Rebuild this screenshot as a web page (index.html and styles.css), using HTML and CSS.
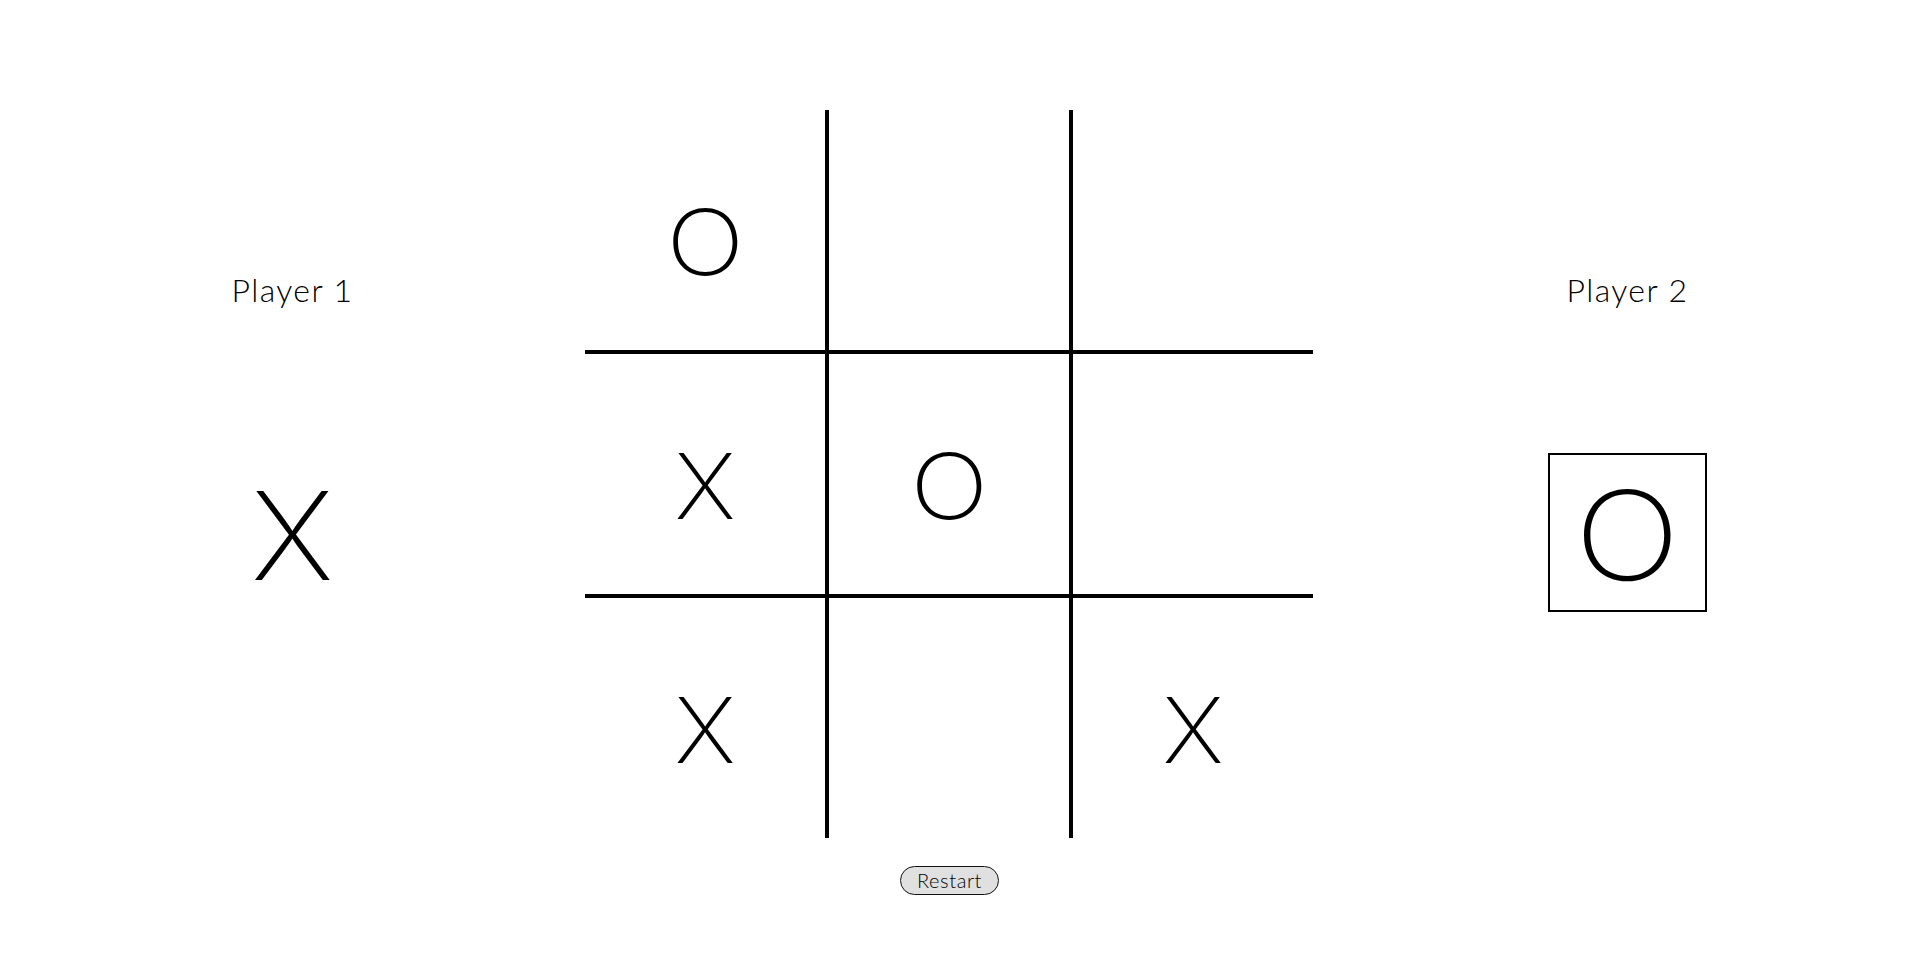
FILE: index.html
```html
<!DOCTYPE html>
<html lang="en">
<head>
<meta charset="utf-8">
<title>Tic Tac Toe</title>
<link rel="stylesheet" href="styles.css">
</head>
<body>
<main class="game">
  <section class="player">
    <h2 class="player-name">Player 1</h2>
    <div class="player-mark"><span class="mark mark-x">X</span></div>
  </section>
  <section class="center">
    <div class="board">
      <div class="cell"><span class="mark mark-o">O</span></div>
      <div class="cell"></div>
      <div class="cell"></div>
      <div class="cell"><span class="mark mark-x">X</span></div>
      <div class="cell"><span class="mark mark-o">O</span></div>
      <div class="cell"></div>
      <div class="cell"><span class="mark mark-x">X</span></div>
      <div class="cell"></div>
      <div class="cell"><span class="mark mark-x">X</span></div>
    </div>
    <button class="restart" type="button">Restart</button>
  </section>
  <section class="player">
    <h2 class="player-name">Player 2</h2>
    <div class="player-mark active"><span class="mark mark-o">O</span></div>
  </section>
</main>
</body>
</html>
```

FILE: styles.css
```css
html, body {
  margin: 0;
  padding: 0;
  background: #fff;
}

body {
  font-family: "Lato", "Liberation Sans", sans-serif;
  font-weight: 300;
  color: #000;
}

.game {
  display: grid;
  grid-template-columns: 585px 750px 585px;
  padding-top: 110px;
}

.player {
  display: flex;
  flex-direction: column;
  align-items: center;
}

.player-name {
  margin: 160px 0 0;
  font-size: 32px;
  font-weight: 300;
  letter-spacing: 1.4px;
  line-height: 39px;
}

.player-mark {
  box-sizing: border-box;
  width: 159px;
  height: 159px;
  margin-top: 144px;
  padding-top: 5px;
  border: 2px solid transparent;
  display: flex;
  align-items: center;
  justify-content: center;
  font-family: "Inter", "Lato", sans-serif;
  font-size: 123px;
  font-weight: 200;
  line-height: 1;
}

.player-mark.active {
  border-color: #000;
}

.mark {
  display: inline-block;
}

.mark-x {
  transform: scaleX(1.05);
}

.mark-o {
  transform: scaleX(1.14);
}

.center {
  display: flex;
  flex-direction: column;
  align-items: flex-start;
}

.board {
  display: grid;
  grid-template-columns: repeat(3, 240px);
  grid-template-rows: repeat(3, 240px);
  gap: 4px;
  background: #000;
}

.cell {
  background: #fff;
  display: flex;
  align-items: center;
  justify-content: center;
  font-family: "Inter", "Lato", sans-serif;
  font-size: 91px;
  font-weight: 200;
  line-height: 1;
  padding-top: 25px;
  box-sizing: border-box;
}

.restart {
  margin: 28px 0 0 315px;
  box-sizing: border-box;
  width: 99px;
  height: 29px;
  padding: 0;
  border: 1px solid #111;
  border-radius: 15px;
  background: #e0e0e0;
  color: #000;
  font-family: "Lato", "Liberation Sans", sans-serif;
  font-weight: 300;
  font-size: 20px;
  letter-spacing: 0.6px;
  line-height: 27px;
}
```
